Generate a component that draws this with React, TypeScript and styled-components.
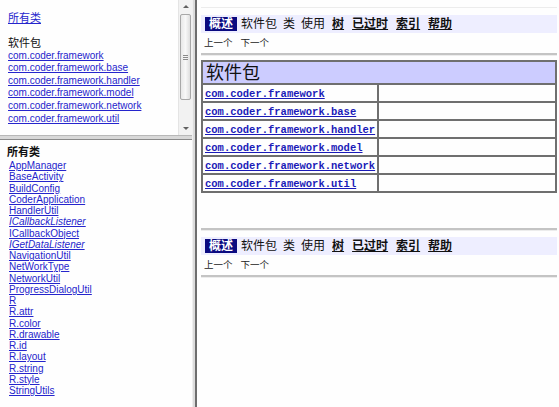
import React from "react";
import styled, { createGlobalStyle } from "styled-components";

const Global = createGlobalStyle`
  html, body { margin: 0; padding: 0; background: #fefefe; }
  body { font-family: "Liberation Sans", Arial, "Noto Sans CJK SC", sans-serif; }
`;

const CJK = `"Liberation Sans", Arial, "Noto Sans CJK SC", sans-serif`;

const Frameset = styled.div`
  display: grid;
  grid-template-columns: 192px 5px 1fr;
  width: 559px;
  height: 407px;
  overflow: hidden;
  background: #fefefe;
`;

const LeftColumn = styled.div`
  display: grid;
  grid-template-rows: 135px 5px 1fr;
  min-height: 0;
`;

const VSplitter = styled.div`
  background: #dcdcdc;
  border-left: 1px solid #efefef;
  border-right: 2px solid #6e6e6e;
`;

const HSplitter = styled.div`
  background: #d8d8d8;
  border-top: 1px solid #b8b8b8;
  border-bottom: 1px solid #8a8a8a;
`;

const TopFrame = styled.div`
  display: flex;
  min-height: 0;
  overflow: hidden;
`;

const FrameBody = styled.div`
  flex: 1;
  padding: 12px 0 0 8px;
  font-size: 10px;
  line-height: 12.6px;
`;

const Link = styled.a<{ $italic?: boolean }>`
  display: block;
  color: #2525cc;
  text-decoration: underline;
  font-style: ${(p) => (p.$italic ? "italic" : "normal")};
  white-space: nowrap;
`;

const AllClassesLink = styled(Link)`
  font-family: ${CJK};
  font-size: 11px;
  margin-bottom: 12px;
`;

const Heading = styled.div<{ $bold?: boolean }>`
  font-family: ${CJK};
  font-size: 11px;
  font-weight: ${(p) => (p.$bold ? 700 : 400)};
  color: #111;
  line-height: 13px;
`;

const Scrollbar = styled.div`
  width: 13px;
  display: flex;
  flex-direction: column;
  background: #f2f2f2;
  border-left: 1px solid #e4e4e4;
`;

const Arrow = styled.div<{ $down?: boolean }>`
  height: 13px;
  display: flex;
  align-items: center;
  justify-content: center;
  &::before {
    content: "";
    border-left: 3px solid transparent;
    border-right: 3px solid transparent;
    ${(p) =>
      p.$down ? "border-top: 3px solid #606060;" : "border-bottom: 3px solid #606060;"}
  }
`;

const Track = styled.div`
  flex: 1;
  display: flex;
  flex-direction: column;
  padding: 1px 1px;
`;

const Thumb = styled.div`
  height: 84px;
  border: 1px solid #a8a8a8;
  border-radius: 2px;
  background: linear-gradient(90deg, #e8e8e8, #f8f8f8 50%, #dedede);
  display: flex;
  align-items: center;
  justify-content: center;
  &::before {
    content: "";
    width: 5px;
    height: 5px;
    background: repeating-linear-gradient(
      180deg,
      #8a8a8a 0,
      #8a8a8a 1px,
      transparent 1px,
      transparent 2px
    );
  }
`;

const BottomFrame = styled.div`
  padding: 6px 0 0 7px;
  overflow: hidden;
`;

const ClassList = styled.div`
  padding: 1px 0 0 2px;
  font-size: 10px;
  line-height: 11.25px;
`;

const RightFrame = styled.div`
  padding: 0 2px 0 4px;
  display: flex;
  flex-direction: column;
  min-width: 0;
`;

const FaintRule = styled.div`
  margin-top: 7px;
  height: 1px;
  background: #ececec;
  flex-shrink: 0;
`;

const NavBar = styled.div<{ $top: number }>`
  margin-top: ${(p) => p.$top}px;
  height: 18px;
  flex-shrink: 0;
  background: #eeeeff;
  display: flex;
  align-items: center;
  padding-left: 4px;
  gap: 6px;
  font-family: ${CJK};
  font-size: 12px;
  color: #111;
`;

const NavCell = styled.span<{ $active?: boolean; $link?: boolean }>`
  padding: ${(p) => (p.$active ? "1px 4px" : p.$link ? "0 1px" : "0")};
  margin-right: ${(p) => (p.$active ? "-2px" : "0")};
  background: ${(p) => (p.$active ? "#0a0a80" : "transparent")};
  color: ${(p) => (p.$active ? "#fff" : "#111")};
  font-weight: ${(p) => (p.$active || p.$link ? 700 : 400)};
  text-decoration: ${(p) => (p.$link ? "underline" : "none")};
  line-height: 12px;
`;

const SubNav = styled.div`
  height: 17px;
  flex-shrink: 0;
  display: flex;
  align-items: center;
  gap: 8px;
  padding-left: 3px;
  font-family: ${CJK};
  font-size: 9.5px;
  color: #222;
`;

const Rule = styled.div<{ $top: number }>`
  margin-top: ${(p) => p.$top}px;
  height: 2px;
  flex-shrink: 0;
  background: #c4c4c4;
  border-bottom: 1px solid #ececec;
`;

const Summary = styled.table`
  margin-top: 4px;
  border-collapse: collapse;
  width: 100%;
  border: 2px solid #6f6f6f;
  flex-shrink: 0;
`;

const HeadCell = styled.th`
  background: #ccccff;
  text-align: left;
  font-family: ${CJK};
  font-size: 18px;
  font-weight: 400;
  line-height: 20px;
  height: 20px;
  padding: 1px 0 0 3px;
  border: 2px solid #6f6f6f;
  color: #111;
`;

const Cell = styled.td<{ $name?: boolean }>`
  height: 16px;
  line-height: 14px;
  font-size: 10.5px;
  padding: 0 0 0 2px;
  border: 2px solid #6f6f6f;
  width: ${(p) => (p.$name ? "172px" : "auto")};
`;

const CodeLink = styled.a`
  font-family: "Liberation Mono", "Courier New", monospace;
  font-weight: 700;
  font-size: 10.5px;
  color: #1a1ab8;
  text-decoration: underline;
  white-space: nowrap;
`;

const packages = [
  "com.coder.framework",
  "com.coder.framework.base",
  "com.coder.framework.handler",
  "com.coder.framework.model",
  "com.coder.framework.network",
  "com.coder.framework.util",
];

const classes: { name: string; iface?: boolean }[] = [
  { name: "AppManager" },
  { name: "BaseActivity" },
  { name: "BuildConfig" },
  { name: "CoderApplication" },
  { name: "HandlerUtil" },
  { name: "ICallbackListener", iface: true },
  { name: "ICallbackObject" },
  { name: "IGetDataListener", iface: true },
  { name: "NavigationUtil" },
  { name: "NetWorkType" },
  { name: "NetworkUtil" },
  { name: "ProgressDialogUtil" },
  { name: "R" },
  { name: "R.attr" },
  { name: "R.color" },
  { name: "R.drawable" },
  { name: "R.id" },
  { name: "R.layout" },
  { name: "R.string" },
  { name: "R.style" },
  { name: "StringUtils" },
];

const navItems: { label: string; active?: boolean; link?: boolean }[] = [
  { label: "概述", active: true },
  { label: "软件包" },
  { label: "类" },
  { label: "使用" },
  { label: "树", link: true },
  { label: "已过时", link: true },
  { label: "索引", link: true },
  { label: "帮助", link: true },
];

function Navigation({ top }: { top: number }) {
  return (
    <>
      <NavBar $top={top}>
        {navItems.map((n) => (
          <NavCell key={n.label} $active={n.active} $link={n.link}>
            {n.label}
          </NavCell>
        ))}
      </NavBar>
      <SubNav>
        <span>上一个</span>
        <span>下一个</span>
      </SubNav>
    </>
  );
}

export default function App() {
  return (
    <>
      <Global />
      <Frameset>
        <LeftColumn>
          <TopFrame>
            <FrameBody>
              <AllClassesLink href="#">所有类</AllClassesLink>
              <Heading>软件包</Heading>
              {packages.map((p) => (
                <Link key={p} href="#">
                  {p}
                </Link>
              ))}
            </FrameBody>
            <Scrollbar>
              <Arrow />
              <Track>
                <Thumb />
              </Track>
              <Arrow $down />
            </Scrollbar>
          </TopFrame>
          <HSplitter />
          <BottomFrame>
            <Heading $bold>所有类</Heading>
            <ClassList>
              {classes.map((c) => (
                <Link key={c.name} href="#" $italic={c.iface}>
                  {c.name}
                </Link>
              ))}
            </ClassList>
          </BottomFrame>
        </LeftColumn>
        <VSplitter />
        <RightFrame>
          <FaintRule />
          <Navigation top={7} />
          <Rule $top={3} />
          <Summary>
            <thead>
              <tr>
                <HeadCell colSpan={2}>软件包</HeadCell>
              </tr>
            </thead>
            <tbody>
              {packages.map((p) => (
                <tr key={p}>
                  <Cell $name>
                    <CodeLink href="#">{p}</CodeLink>
                  </Cell>
                  <Cell />
                </tr>
              ))}
            </tbody>
          </Summary>
          <Rule $top={35} />
          <Navigation top={6} />
          <Rule $top={3} />
        </RightFrame>
      </Frameset>
    </>
  );
}
